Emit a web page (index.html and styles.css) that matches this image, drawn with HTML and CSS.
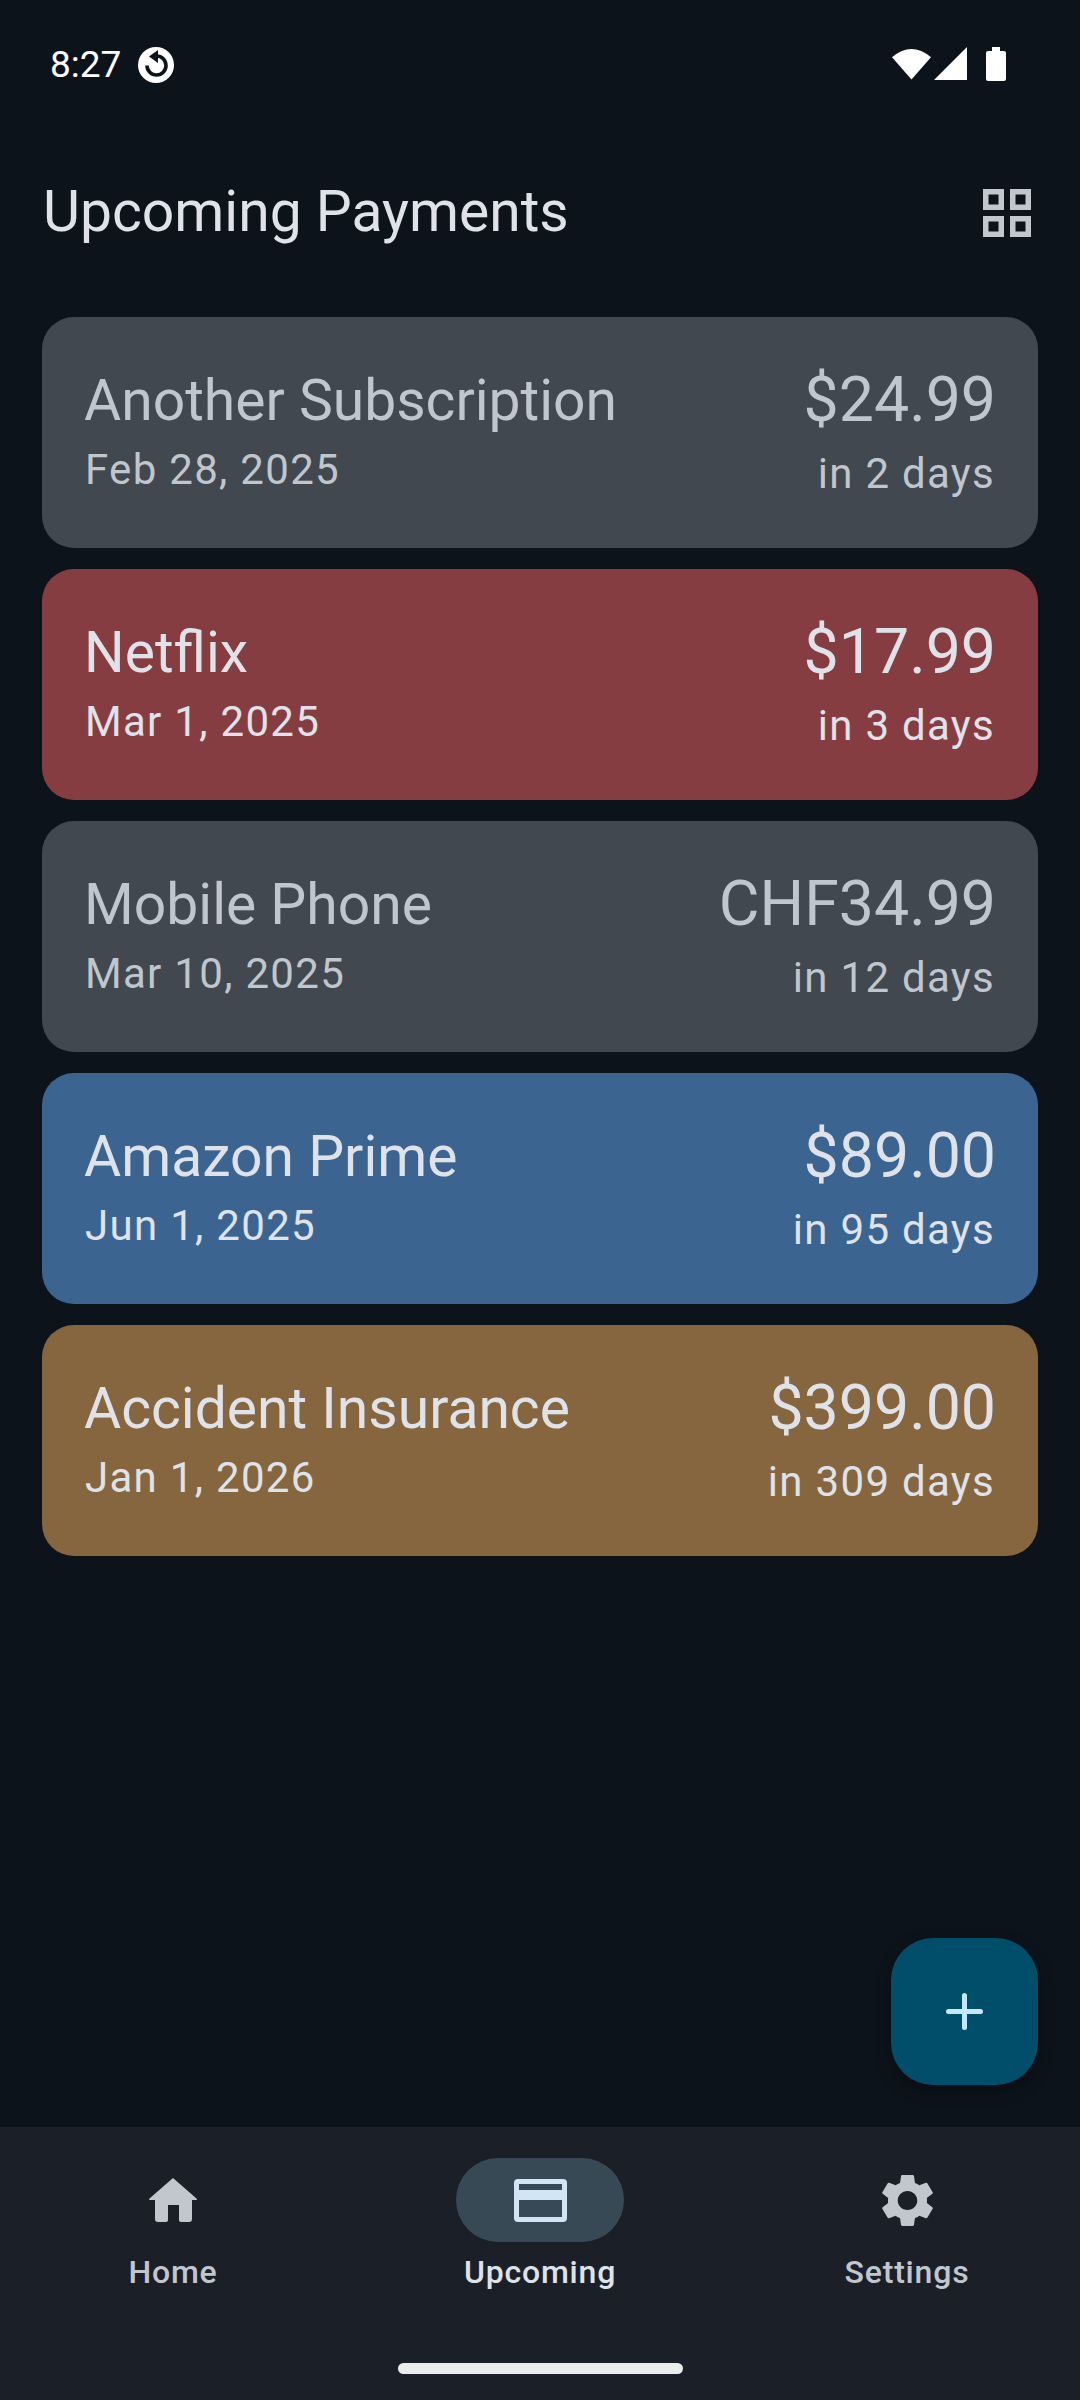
FILE: index.html
```html
<!DOCTYPE html>
<html lang="en">
<head>
  <meta charset="UTF-8">
  <title>Upcoming Payments</title>
  <link rel="stylesheet" href="styles.css">
</head>
<body>
  <div class="screen">
    <div class="status-bar">
      <div class="status-left">
        <span class="clock">8:27</span>
        <svg class="sync-icon" width="36" height="36" viewBox="0 0 36 36">
          <circle cx="18" cy="18" r="18" fill="#fff"/>
          <path d="M20 3 L11 9.500 L20 16 Z" fill="#0c131a"/>
          <path d="M18.500 9 A9.500 9.500 0 1 1 9 18.500" fill="none" stroke="#0c131a" stroke-width="3.600"/>
        </svg>
      </div>
      <div class="status-right">
        <svg width="39" height="33" viewBox="0 0 40 33"><path d="M0 10 Q20 -7 40 10 L20 33 Z" fill="#fff"/></svg>
        <svg width="33" height="33" viewBox="0 0 33 33"><path d="M33 0 V33 H0 Z" fill="#fff"/></svg>
        <svg class="battery" width="20" height="34" viewBox="0 0 20 34"><path d="M6 0 H14 V4 H18 Q20 4 20 6 V32 Q20 34 18 34 H2 Q0 34 0 32 V6 Q0 4 2 4 H6 Z" fill="#fff"/></svg>
      </div>
    </div>

    <div class="top-bar">
      <h1>Upcoming Payments</h1>
      <svg class="grid-icon" width="48" height="48" viewBox="0 0 48 48">
        <path fill="#c2c7ce" fill-rule="evenodd" d="M0 0 H21 V21 H0 Z M5.500 5.500 V15.500 H15.500 V5.500 Z M27 0 H48 V21 H27 Z M32.500 5.500 V15.500 H42.500 V5.500 Z M0 27 H21 V48 H0 Z M5.500 32.500 V42.500 H15.500 V32.500 Z M27 27 H48 V48 H27 Z M32.500 32.500 V42.500 H42.500 V32.500 Z"/>
      </svg>
    </div>

    <div class="card-list">
      <div class="card card-grey dimmed">
        <div class="card-left">
          <div class="card-name">Another Subscription</div>
          <div class="card-date">Feb 28, 2025</div>
        </div>
        <div class="card-right">
          <div class="card-amount">$24.99</div>
          <div class="card-due">in 2 days</div>
        </div>
      </div>
      <div class="card card-red">
        <div class="card-left">
          <div class="card-name">Netflix</div>
          <div class="card-date">Mar 1, 2025</div>
        </div>
        <div class="card-right">
          <div class="card-amount">$17.99</div>
          <div class="card-due">in 3 days</div>
        </div>
      </div>
      <div class="card card-grey dimmed">
        <div class="card-left">
          <div class="card-name">Mobile Phone</div>
          <div class="card-date">Mar 10, 2025</div>
        </div>
        <div class="card-right">
          <div class="card-amount">CHF34.99</div>
          <div class="card-due">in 12 days</div>
        </div>
      </div>
      <div class="card card-blue">
        <div class="card-left">
          <div class="card-name">Amazon Prime</div>
          <div class="card-date">Jun 1, 2025</div>
        </div>
        <div class="card-right">
          <div class="card-amount">$89.00</div>
          <div class="card-due">in 95 days</div>
        </div>
      </div>
      <div class="card card-brown">
        <div class="card-left">
          <div class="card-name">Accident Insurance</div>
          <div class="card-date">Jan 1, 2026</div>
        </div>
        <div class="card-right">
          <div class="card-amount">$399.00</div>
          <div class="card-due">in 309 days</div>
        </div>
      </div>
    </div>

    <div class="fab-area">
      <button class="fab">
        <svg width="37" height="37" viewBox="0 0 37 37"><path d="M18.500 2.500 V34.500 M2.500 18.500 H34.500" stroke="#c5e7ff" stroke-width="5" stroke-linecap="round"/></svg>
      </button>
    </div>

    <div class="bottom-nav">
      <div class="nav-items">
        <div class="nav-item">
          <div class="nav-icon">
            <svg width="48" height="44" viewBox="0 0 48 44"><path fill="#c2c7ce" d="M24 0 L47.500 20.500 Q48.500 22 47 22 H43 V41 Q43 44 40 44 H33 Q30 44 30 42 V27 H19 V42 Q19 44 16 44 H9 Q6 44 6 41 V22 H1 Q-0.500 22 0.500 20.500 Z"/></svg>
          </div>
          <span class="nav-label">Home</span>
        </div>
        <div class="nav-item active">
          <div class="nav-icon">
            <svg width="53" height="43" viewBox="0 0 53 43"><path fill="#d1e5f4" fill-rule="evenodd" d="M4 0 H49 Q53 0 53 4 V39 Q53 43 49 43 H4 Q0 43 0 39 V4 Q0 0 4 0 Z M5 5 V11 H48 V5 Z M5 21 V38 H48 V21 Z"/></svg>
          </div>
          <span class="nav-label">Upcoming</span>
        </div>
        <div class="nav-item">
          <div class="nav-icon">
            <svg width="51" height="53" viewBox="2.600 2 18.800 20" preserveAspectRatio="none"><path fill="#c2c7ce" fill-rule="evenodd" d="M19.140 12.940c.04-.3.060-.61.060-.94 0-.32-.020-.64-.070-.94l2.030-1.580a.49.49 0 0 0 .12-.61l-1.920-3.320a.488.488 0 0 0-.59-.22l-2.390.96c-.5-.38-1.030-.7-1.620-.94l-.36-2.540a.484.484 0 0 0-.48-.41h-3.840c-.24 0-.43.170-.47.41l-.36 2.540c-.59.24-1.130.57-1.620.94l-2.390-.96c-.22-.08-.47 0-.59.22L2.740 8.870c-.12.210-.08.470.12.610l2.030 1.580c-.05.3-.09.630-.09.940s.020.640.070.94l-2.030 1.580a.49.49 0 0 0-.12.610l1.920 3.320c.12.220.37.290.59.220l2.390-.96c.5.380 1.030.7 1.620.94l.36 2.540c.05.240.24.410.48.410h3.840c.24 0 .44-.170.47-.41l.36-2.540c.59-.24 1.130-.56 1.620-.94l2.390.96c.22.080.47 0 .59-.22l1.920-3.320c.12-.22.070-.47-.12-.61l-2.010-1.580zM12 15.600c-1.980 0-3.600-1.620-3.600-3.600s1.620-3.600 3.600-3.600 3.600 1.620 3.600 3.600-1.620 3.600-3.600 3.600z"/></svg>
          </div>
          <span class="nav-label">Settings</span>
        </div>
      </div>
      <div class="home-indicator"></div>
    </div>
  </div>
</body>
</html>
```

FILE: styles.css
```css
* {
  box-sizing: border-box;
}

body {
  margin: 0;
  background-color: #0c131a;
  font-family: Roboto, "Liberation Sans", sans-serif;
}

.screen {
  width: 1080px;
  height: 2400px;
  display: flex;
  flex-direction: column;
  overflow: hidden;
}

.status-bar {
  height: 128px;
  padding: 47px 74px 0 50px;
  display: flex;
  justify-content: space-between;
  align-items: flex-start;
  color: #fff;
}

.status-left {
  display: flex;
  align-items: center;
  gap: 17px;
}

.clock {
  font-size: 37px;
  line-height: 36px;
}

.status-right {
  display: flex;
  align-items: flex-start;
  gap: 3px;
}

.battery {
  margin-left: 16px;
}

.top-bar {
  height: 96px;
  margin-top: 35px;
  padding: 0 49px 0 43px;
  display: flex;
  justify-content: space-between;
  align-items: center;
}

h1 {
  margin: 0;
  font-size: 57px;
  font-weight: 400;
  color: #dfe3e9;
}

.grid-icon {
  margin-top: 4px;
}

.card-list {
  margin-top: 58px;
  padding: 0 42px;
  display: flex;
  flex-direction: column;
  gap: 21px;
}

.card {
  height: 231px;
  padding: 0 42px 0 43px;
  border-radius: 32px;
  display: flex;
  justify-content: space-between;
  align-items: center;
  color: #dfe3e9;
}

.card-grey {
  background-color: #41484f;
}

.dimmed {
  color: #c0c6cd;
}

.card-red {
  background-color: #863d41;
}

.card-blue {
  background-color: #3b6590;
}

.card-brown {
  background-color: #85663f;
}

.card-left {
  display: flex;
  flex-direction: column;
  gap: 12px;
  padding-bottom: 4px;
}

.card-right {
  display: flex;
  flex-direction: column;
  align-items: flex-end;
  gap: 14px;
  padding-bottom: 3px;
}

.card-name {
  margin-left: -1px;
  font-size: 57px;
  line-height: 66px;
}

.card-date,
.card-due {
  font-size: 42px;
  line-height: 48px;
  letter-spacing: 1.3px;
}

.card-due {
  margin-right: 1px;
}

.card-amount {
  font-size: 62.6px;
  line-height: 72px;
}

.fab-area {
  flex: 1;
  padding: 0 42px 42px 0;
  display: flex;
  justify-content: flex-end;
  align-items: flex-end;
}

.fab {
  width: 147px;
  height: 147px;
  padding: 0;
  border: none;
  border-radius: 42px;
  background-color: #004e6a;
  display: flex;
  align-items: center;
  justify-content: center;
  box-shadow: 0 6px 16px rgba(0, 0, 0, 0.25);
}

.bottom-nav {
  height: 273px;
  background-color: #1b2028;
  display: flex;
  flex-direction: column;
  align-items: center;
}

.nav-items {
  width: 100%;
  padding-top: 31px;
  display: grid;
  grid-template-columns: repeat(3, 168px);
  justify-content: center;
  column-gap: 199px;
}

.nav-item {
  display: flex;
  flex-direction: column;
  align-items: center;
  gap: 8px;
  color: #c2c7ce;
}

.nav-icon {
  width: 168px;
  height: 84px;
  border-radius: 42px;
  display: flex;
  align-items: center;
  justify-content: center;
}

.nav-item.active .nav-icon {
  background-color: #374955;
}

.nav-item.active {
  color: #dfe3e9;
}

.nav-label {
  font-size: 32px;
  line-height: 44px;
  font-weight: 500;
  letter-spacing: 0.8px;
  white-space: nowrap;
}

.home-indicator {
  margin-top: 69px;
  width: 285px;
  height: 11px;
  border-radius: 6px;
  background-color: #ececec;
}
```
